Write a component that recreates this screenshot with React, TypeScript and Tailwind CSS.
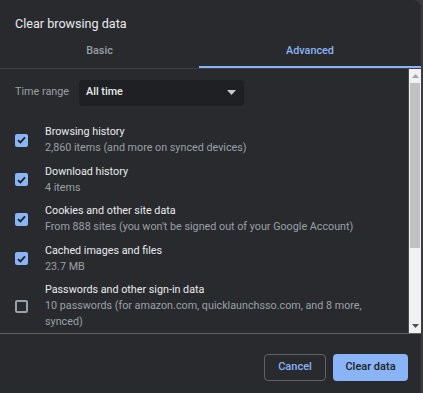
import React from "react";

const items = [
  { title: "Browsing history", sub: "2,860 items (and more on synced devices)", checked: true },
  { title: "Download history", sub: "4 items", checked: true },
  { title: "Cookies and other site data", sub: "From 888 sites (you won't be signed out of your Google Account)", checked: true },
  { title: "Cached images and files", sub: "23.7 MB", checked: true },
  {
    title: "Passwords and other sign-in data",
    sub: "10 passwords (for amazon.com, quicklaunchsso.com, and 8 more, synced)",
    checked: false,
  },
];

function Checkbox({ checked }: { checked: boolean }) {
  if (!checked) {
    return <div className="w-[13px] h-[13px] shrink-0 rounded-[2px] border-2 border-[#9aa0a6]" />;
  }
  return (
    <div className="w-[13px] h-[13px] shrink-0 rounded-[2px] bg-[#8ab4f8] flex items-center justify-center">
      <svg width="9" height="8" viewBox="0 0 9 8">
        <path d="M1 4.2 L3.4 6.4 L8 1.4" fill="none" stroke="#202124" strokeWidth="1.8" />
      </svg>
    </div>
  );
}

export default function App() {
  return (
    <div className="w-[423px] h-[393px] bg-[#3a3b3e] flex font-['Roboto',sans-serif]">
      <div className="w-[421px] h-full bg-[#292a2d] rounded-tr-[8px] flex flex-col">
        {/* title */}
        <div className="pt-[14px] pl-[15px] h-[37px] text-[12.6px] leading-[20px] text-[#e8eaed]">
          Clear browsing data
        </div>

        {/* tabs */}
        <div className="flex h-[32px] border-b border-[#3c4043] text-[10.8px] font-medium">
          <div className="w-[199px] flex flex-col">
            <div className="flex-1 flex items-center justify-center text-[#9aa0a6]">Basic</div>
            <div className="h-[2px]" />
          </div>
          <div className="flex-1 flex flex-col">
            <div className="flex-1 flex items-center justify-center text-[#8ab4f8]">Advanced</div>
            <div className="h-[2px] bg-[#8ab4f8]" />
          </div>
        </div>

        {/* content */}
        <div className="flex h-[265px] border-b border-[#5f6368] overflow-hidden">
          <div className="flex-1 pt-[10px] pl-[15px]">
            <div className="flex items-center gap-[10px] h-[26px] pt-[1px]">
              <span className="text-[10.8px] text-[#9aa0a6]">Time range</span>
              <div className="w-[165px] h-[26px] rounded-[4px] bg-[#1f2023] flex items-center justify-between pl-[7px] pr-[8px]">
                <span className="text-[10.8px] font-medium text-[#e8eaed]">All time</span>
                <svg width="9" height="5" viewBox="0 0 9 5">
                  <path d="M0 0 L9 0 L4.5 5 Z" fill="#c8c9cb" />
                </svg>
              </div>
            </div>

            <div className="mt-[19px] flex flex-col gap-[7.5px]">
              {items.map((it) => (
                <div key={it.title} className="flex items-center gap-[17px]">
                  <Checkbox checked={it.checked} />
                  <div className="text-[10.75px] leading-[16px] pr-[40px]">
                    <div className="text-[#e8eaed]">{it.title}</div>
                    <div className="text-[#9aa0a6]">{it.sub}</div>
                  </div>
                </div>
              ))}
            </div>
          </div>

          {/* scrollbar */}
          <div className="w-[13px] border-l border-[#4a4b4e] bg-[#f1f1f1] flex flex-col">
            <div className="h-[14px] flex items-center justify-center">
              <svg width="7" height="4" viewBox="0 0 7 4">
                <path d="M0 4 L7 4 L3.5 0 Z" fill="#a3a3a3" />
              </svg>
            </div>
            <div className="h-[165px] mx-[1px] bg-[#c1c1c1]" />
            <div className="flex-1" />
            <div className="h-[14px] flex items-center justify-center">
              <svg width="7" height="4" viewBox="0 0 7 4">
                <path d="M0 0 L7 0 L3.5 4 Z" fill="#505050" />
              </svg>
            </div>
          </div>
        </div>

        {/* footer */}
        <div className="flex justify-end gap-[7px] pt-[20px] pr-[13px]">
          <button className="w-[62px] h-[27px] rounded-[4px] border border-[#5f6368] text-[11px] font-medium text-[#8ab4f8]">
            Cancel
          </button>
          <button className="w-[75px] h-[27px] rounded-[4px] bg-[#8ab4f8] text-[11px] font-medium text-[#202124]">
            Clear data
          </button>
        </div>
      </div>
    </div>
  );
}
